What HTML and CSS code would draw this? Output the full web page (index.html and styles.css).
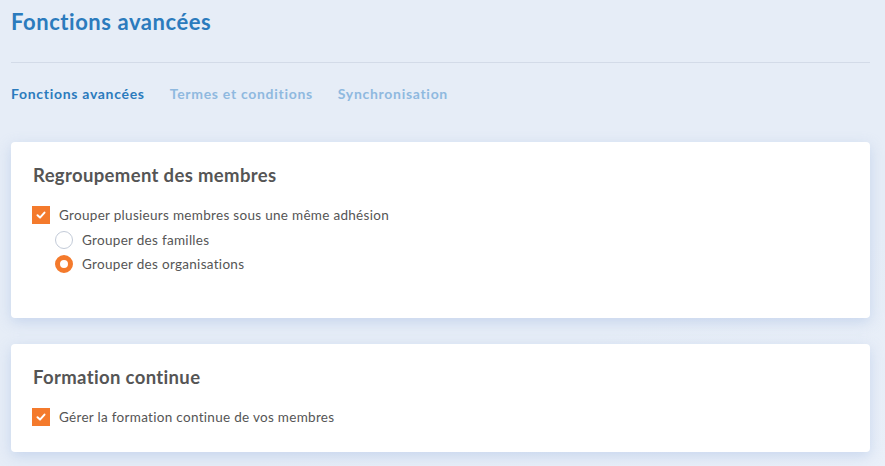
FILE: index.html
```html
<!DOCTYPE html>
<html lang="fr">
<head>
<meta charset="utf-8">
<link rel="stylesheet" href="styles.css">
</head>
<body>
<div class="page">
  <h1 class="title">Fonctions avancées</h1>
  <div class="sep"></div>
  <nav class="tabs">
    <span class="tab active">Fonctions avancées</span>
    <span class="tab">Termes et conditions</span>
    <span class="tab">Synchronisation</span>
  </nav>
  <section class="card card-1">
    <h2 class="card-title">Regroupement des membres</h2>
    <label class="row check-row"><span class="checkbox"><svg viewBox="0 0 18 18" width="18" height="18"><path d="M5.5 9.3 L8 11.6 L12.5 6.6" fill="none" stroke="#fff" stroke-width="2" stroke-linecap="round" stroke-linejoin="round"/></svg></span>Grouper plusieurs membres sous une même adhésion</label>
    <div class="radios">
      <label class="row radio-row"><span class="radio"></span>Grouper des familles</label>
      <label class="row radio-row"><span class="radio on"></span>Grouper des organisations</label>
    </div>
  </section>
  <section class="card card-2">
    <h2 class="card-title">Formation continue</h2>
    <label class="row check-row"><span class="checkbox"><svg viewBox="0 0 18 18" width="18" height="18"><path d="M5.5 9.3 L8 11.6 L12.5 6.6" fill="none" stroke="#fff" stroke-width="2" stroke-linecap="round" stroke-linejoin="round"/></svg></span>Gérer la formation continue de vos membres</label>
  </section>
</div>
</body>
</html>
```
FILE: styles.css
```css
html, body {
  margin: 0;
  padding: 0;
}
body {
  background: linear-gradient(160deg, #e6edf7 0%, #e6edf7 70%, #eaf0f9 100%);
  font-family: "Lato", "Noto Sans", sans-serif;
  width: 885px;
  height: 466px;
  overflow: hidden;
}
.page {
  padding: 0 15px 0 11px;
}
.title {
  margin: 0;
  padding-top: 8px;
  height: 28px;
  font-size: 22px;
  letter-spacing: 0.55px;
  line-height: 28px;
  font-weight: 700;
  color: #2b7bbd;
}
.sep {
  margin-top: 26px;
  height: 1px;
  background: #d3dbe8;
}
.tabs {
  display: flex;
  gap: 25px;
  margin-top: 22px;
  height: 18px;
  line-height: 18px;
  font-size: 14px;
  letter-spacing: 0.7px;
  font-weight: 700;
  color: #8fb9df;
}
.tab.active {
  color: #2b7bbd;
}
.card {
  background: #fff;
  border-radius: 4px;
  box-shadow: 0 4px 14px rgba(160, 185, 225, 0.45);
  padding: 22px 22px 0 22px;
}
.card-1 {
  margin-top: 39px;
  height: 154px;
}
.card-2 {
  margin-top: 26px;
  height: 86px;
}
.card-title {
  margin: 0;
  font-size: 18.5px;
  letter-spacing: 0.35px;
  line-height: 22px;
  font-weight: 700;
  color: #555;
}
.row {
  display: flex;
  align-items: center;
  font-size: 13.5px;
  letter-spacing: 0.3px;
  color: #555;
  height: 18px;
}
.check-row {
  margin-top: 20px;
  margin-left: -1px;
}
.checkbox {
  width: 18px;
  height: 18px;
  background: #f47a2c;
  margin-right: 9px;
  display: block;
}
.checkbox svg {
  display: block;
}
.radios {
  margin-left: 22px;
  margin-top: 7px;
  display: flex;
  flex-direction: column;
  gap: 6px;
}
.radio {
  box-sizing: border-box;
  width: 18px;
  height: 18px;
  border-radius: 50%;
  border: 1px solid #c3cbd8;
  background: #fff;
  margin-right: 9px;
}
.radio.on {
  border: 5.5px solid #f47a2c;
}
```
